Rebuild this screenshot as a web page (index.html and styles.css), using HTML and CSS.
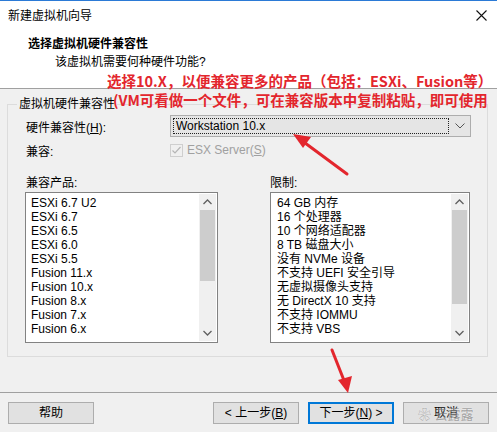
FILE: index.html
```html
<!DOCTYPE html>
<html lang="zh-CN">
<head>
<meta charset="utf-8">
<title>新建虚拟机向导</title>
<link rel="stylesheet" href="styles.css">
</head>
<body>
<div class="window">
  <div class="titlebar">
    <span class="title">新建虚拟机向导</span>
    <svg class="close" width="11" height="11" viewBox="0 0 11 11"><path d="M0.5 0.5 L10.5 10.5 M10.5 0.5 L0.5 10.5" stroke="#111" stroke-width="1.1" fill="none"/></svg>
  </div>
  <div class="header">
    <div class="h1">选择虚拟机硬件兼容性</div>
    <div class="h2">该虚拟机需要何种硬件功能?</div>
  </div>
  <div class="body">
    <div class="group">
      <div class="legend">虚拟机硬件兼容性</div>
      <div class="row">
        <span class="lbl">硬件兼容性(<u>H</u>):</span>
        <div class="combo">
          <span class="combo-text">Workstation 10.x</span>
          <svg class="chev" width="10" height="6" viewBox="0 0 10 6"><path d="M0.5 0.5 L5 5 L9.5 0.5" stroke="#555" fill="none"/></svg>
        </div>
      </div>
      <div class="row row2">
        <span class="lbl">兼容:</span>
        <span class="check">
          <svg width="13" height="13" viewBox="0 0 13 13"><rect x="0.5" y="0.5" width="12" height="12" fill="#f0f0f0" stroke="#cfcfcf"/><path d="M2.5 6.5 L5 9 L10.5 3" stroke="#b5b5b5" stroke-width="1.2" fill="none"/></svg>
        </span>
        <span class="disabled">ESX Server(<u>S</u>)</span>
      </div>
      <div class="lists">
        <div class="col col-left">
          <div class="cap">兼容产品:</div>
          <div class="listbox">
            <ul class="items">
              <li>ESXi 6.7 U2</li><li>ESXi 6.7</li><li>ESXi 6.5</li><li>ESXi 6.0</li><li>ESXi 5.5</li>
              <li>Fusion 11.x</li><li>Fusion 10.x</li><li>Fusion 8.x</li><li>Fusion 7.x</li><li>Fusion 6.x</li>
            </ul>
            <div class="scroll">
              <svg class="sarrow" width="9" height="6" viewBox="0 0 9 6"><path d="M0.5 5 L4.5 1 L8.5 5" stroke="#606060" stroke-width="1.3" fill="none"/></svg>
              <div class="track"><div class="thumb thumb-left"></div></div>
              <svg class="sarrow" width="9" height="6" viewBox="0 0 9 6"><path d="M0.5 1 L4.5 5 L8.5 1" stroke="#606060" stroke-width="1.3" fill="none"/></svg>
            </div>
          </div>
        </div>
        <div class="col col-right">
          <div class="cap">限制:</div>
          <div class="listbox">
            <ul class="items">
              <li>64 GB 内存</li><li>16 个处理器</li><li>10 个网络适配器</li><li>8 TB 磁盘大小</li><li>没有 NVMe 设备</li>
              <li>不支持 UEFI 安全引导</li><li>无虚拟摄像头支持</li><li>无 DirectX 10 支持</li><li>不支持 IOMMU</li><li>不支持 VBS</li>
            </ul>
            <div class="scroll">
              <svg class="sarrow" width="9" height="6" viewBox="0 0 9 6"><path d="M0.5 5 L4.5 1 L8.5 5" stroke="#606060" stroke-width="1.3" fill="none"/></svg>
              <div class="track"><div class="thumb thumb-right"></div></div>
              <svg class="sarrow" width="9" height="6" viewBox="0 0 9 6"><path d="M0.5 1 L4.5 5 L8.5 1" stroke="#606060" stroke-width="1.3" fill="none"/></svg>
            </div>
          </div>
        </div>
      </div>
    </div>
  </div>
  <div class="footer">
    <button class="btn">帮助</button>
    <div class="spacer"></div>
    <button class="btn">&lt; 上一步(<u>B</u>)</button>
    <button class="btn btn-default">下一步(<u>N</u>) &gt;</button>
    <button class="btn">取消</button>
  </div>

  <div class="note note1">选择10.X，以便兼容更多的产品（包括：ESXi、Fusion等）</div>
  <div class="note note2">(VM可看做一个文件，可在兼容版本中复制粘贴，即可使用</div>
  <svg class="arrows" width="497" height="432" viewBox="0 0 497 432">
    <line x1="347" y1="174" x2="301" y2="140" stroke="#e3262d" stroke-width="3" stroke-linecap="round"/>
    <polygon points="293,134 311,137 303,148" fill="#e3262d"/>
    <line x1="332" y1="350" x2="345" y2="383" stroke="#e3262d" stroke-width="3" stroke-linecap="round"/>
    <polygon points="348,393 338,380 352,376" fill="#e3262d"/>
  </svg>
  <div class="watermark">❀ 云露露</div>
</div>
</body>
</html>
```

FILE: styles.css
```css
* { box-sizing: border-box; }
html, body { margin: 0; padding: 0; }
body {
  width: 497px;
  height: 432px;
  overflow: hidden;
  background: #f0f0f0;
  font-family: "Liberation Sans", "Noto Sans CJK SC", sans-serif;
  font-size: 12px;
  color: #000;
}
.window {
  position: relative;
  width: 497px;
  height: 432px;
  display: flex;
  flex-direction: column;
}
.titlebar {
  height: 30px;
  background: #fff;
  border-top: 1px solid #2b7ad6;
  display: flex;
  align-items: center;
  justify-content: space-between;
  padding: 0 10px 0 8px;
}
.title { font-size: 12px; line-height: 16px; }
.close { display: block; }
.header {
  height: 59px;
  background: #fff;
  border-bottom: 1px solid #a0a0a0;
  padding-top: 6px;
}
.h1 {
  font-weight: bold;
  padding-left: 28px;
  line-height: 16px;
}
.h2 {
  padding-left: 55px;
  margin-top: 2px;
  line-height: 16px;
}
.body {
  padding: 15px 9px 0 7px;
}
.group {
  border: 1px solid #dcdcdc;
  padding: 0 16px 13px 17px;
}
.legend {
  width: fit-content;
  height: 16px;
  margin: -9px 0 0 -8px;
  padding: 0 2px;
  background: #f0f0f0;
  line-height: 16px;
}
.row {
  display: flex;
  align-items: center;
  height: 22px;
  margin-top: 3px;
}
.row2 { margin-top: 2px; }
.lbl {
  width: 145px;
  padding-left: 1px;
}
.combo {
  flex: 1;
  height: 22px;
  background: #e5e5e5;
  border: 1px solid #adadad;
  display: flex;
  align-items: center;
  padding: 2px;
}
.combo-text {
  flex: 1;
  height: 16px;
  line-height: 14px;
  padding-left: 2px;
  border: 1px dotted #222;
}
.chev { margin: 0 3px 0 6px; }
.check { display: flex; margin-right: 4px; }
.disabled { color: #a0a0a0; }
.lists {
  display: flex;
  gap: 52px;
  margin-top: 14px;
}
.col-left { width: 193px; }
.col-right { width: 200px; }
.cap {
  line-height: 16px;
  padding-left: 1px;
}
.col-right .cap { padding-left: 0; }
.listbox {
  margin-top: 1px;
  height: 151px;
  background: #fff;
  border: 1px solid #828282;
  display: flex;
}
.items {
  list-style: none;
  margin: 0;
  padding: 3px 0 0 5px;
  flex: 1;
}
.items li {
  line-height: 14px;
  height: 14px;
  white-space: nowrap;
}
.col-right .items { padding-left: 6px; }
.scroll {
  width: 17px;
  margin: 1px 1px 1px 0;
  background: #f0f0f0;
  display: flex;
  flex-direction: column;
  align-items: center;
}
.sarrow { margin: 5px 0; flex: none; }
.track {
  flex: 1;
  width: 100%;
}
.thumb {
  width: 15px;
  margin-left: 1px;
  background: #cdcdcd;
}
.thumb-left { height: 71px; }
.thumb-right { height: 94px; }
.footer {
  margin-top: auto;
  height: 40px;
  border-top: 1px solid #a0a0a0;
  display: flex;
  align-items: flex-start;
  gap: 9px;
  padding: 9px 8px 0 8px;
}
.spacer { flex: 1; }
.btn {
  width: 86px;
  height: 22px;
  background: #e1e1e1;
  border: 1px solid #adadad;
  font: inherit;
  color: #000;
  padding: 0;
  line-height: 20px;
}
.btn-default {
  border: 2px solid #0078d7;
  line-height: 18px;
}
.note {
  position: absolute;
  color: #e3262d;
  font-family: "Noto Sans CJK SC", sans-serif;
  font-weight: bold;
  font-size: 14.5px;
  line-height: 18px;
  white-space: nowrap;
}
.note1 { left: 107px; top: 72px; }
.note2 { left: 113px; top: 91px; }
.arrows {
  position: absolute;
  left: 0;
  top: 0;
  pointer-events: none;
}
.watermark {
  position: absolute;
  left: 418px;
  top: 404px;
  color: #8a8a8a;
  font-size: 13px;
  opacity: 0.7;
  text-shadow: 0 0 2px #fff;
}
```
